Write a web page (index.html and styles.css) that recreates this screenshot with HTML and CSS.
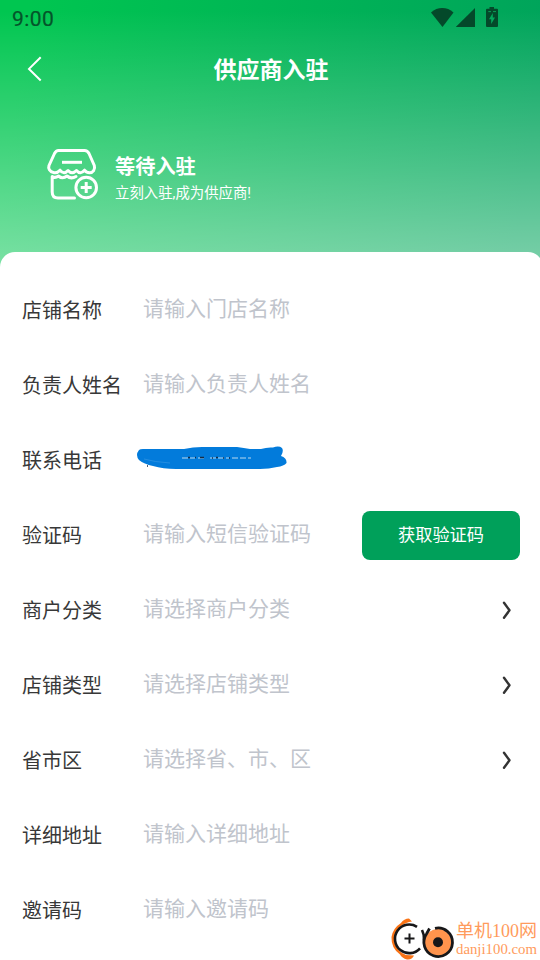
FILE: index.html
```
<!DOCTYPE html>
<html lang="zh-CN">
<head>
<meta charset="utf-8">
<title>供应商入驻</title>
<link rel="stylesheet" href="styles.css">
</head>
<body>
<header class="hero">
  <div class="status">
    <span class="time">9:00</span>
    <svg class="status-icons" width="70" height="24" viewBox="0 0 70 24" fill="#04492a">
      <path d="M0 12.500C6.500 6.600 16 6.600 22.500 12.500L11.500 27Z"/>
      <path d="M25 27V26.800L44 8V27Z"/>
      <path fill-rule="evenodd" d="M58.500 7H63V8.700H66Q67 8.700 67 9.700V26Q67 27 66 27H56Q55 27 55 26V9.700Q55 8.700 56 8.700H58.500ZM61.800 13L58 19.300H60.200V24L64 17.500H61.800Z"/>
      <path d="M57.300 11.600H60M62 11.600H65" stroke="#0a9f57" stroke-width="1"/>
    </svg>
  </div>
  <div class="navbar">
    <svg class="back" width="18" height="26" viewBox="0 0 18 26" fill="none" stroke="#fff" stroke-width="2"><path d="M14.700 1.300L3 12.900L14.700 24.500"/></svg>
    <h1>供应商入驻</h1>
  </div>
  <div class="intro">
    <svg width="54" height="54" viewBox="0 0 54 54" fill="none" stroke="#fff" stroke-width="3" stroke-linecap="round" stroke-linejoin="round">
      <path d="M13.500 3.500H39.500Q42.500 3.500 44 6.500L49.300 18.500C50.500 22.500 48 25.800 44.500 25.800Q41.500 25.800 39.500 23.200Q35.300 28 31.500 23.500Q27 28 23 23.500Q19 28 15 23.200Q12 26.500 8.500 25.500C4.500 24.800 3 21.500 4 18.500L9.500 6.500Q11 3.500 13.500 3.500Z"/>
      <path d="M17 15.300H37" stroke-linecap="butt"/>
      <path d="M29.500 51H13Q7.200 51 7.200 45V29.500Q10 31.500 13.500 29Q17.500 32.500 22 29Q26 32.500 31 29.500"/>
      <circle cx="41.200" cy="40.500" r="10.300"/>
      <path d="M35.700 40.500H46.700M41.200 35V46" stroke-linecap="butt"/>
    </svg>
    <div class="intro-text">
      <h2>等待入驻</h2>
      <p>立刻入驻,成为供应商!</p>
    </div>
  </div>
</header>
<main class="form">
  <div class="row"><span class="label">店铺名称</span><span class="hint">请输入门店名称</span></div>
  <div class="row"><span class="label">负责人姓名</span><span class="hint">请输入负责人姓名</span></div>
  <div class="row"><span class="label">联系电话</span>
    <svg class="redaction" width="153" height="26" viewBox="0 0 153 26">
      <path fill="#027bdb" d="M4 4Q5 3 8 3H49Q58 1 67 1H102Q109 2 115 3H126Q132 1 138 1.500Q144 -.5 147 2Q149 5 146 10Q152 12 151.500 17Q149 20 142 21Q134 23 125 23H41Q28 23 18 20Q9 18 4 14Q0 9 4 4Z"/>
      <path d="M47 12H60M63 12H69M75 12H94M97 12H116" stroke="#b9d9ee" stroke-width="1" stroke-dasharray="6 2"/>
      <path d="M53 11.500H55M60 11.500H61M65 11.500H69M77 12H78M81 11.500H83M88 12H89M94 12H95M12 20H13" stroke="#172d47" stroke-width="1.700"/>
      <path d="M9 13Q19 16 35 17" fill="none" stroke="#3a98e3" stroke-width=".6"/>
    </svg>
  </div>
  <div class="row"><span class="label">验证码</span><span class="hint">请输入短信验证码</span><button class="code">获取验证码</button></div>
  <div class="row"><span class="label">商户分类</span><span class="hint">请选择商户分类</span><svg class="more" width="12" height="20" viewBox="0 0 12 20"><path d="M3 2.800L8.500 10.300L3 17.800"/></svg></div>
  <div class="row"><span class="label">店铺类型</span><span class="hint">请选择店铺类型</span><svg class="more" width="12" height="20" viewBox="0 0 12 20"><path d="M3 2.800L8.500 10.300L3 17.800"/></svg></div>
  <div class="row"><span class="label">省市区</span><span class="hint">请选择省、市、区</span><svg class="more" width="12" height="20" viewBox="0 0 12 20"><path d="M3 2.800L8.500 10.300L3 17.800"/></svg></div>
  <div class="row"><span class="label">详细地址</span><span class="hint">请输入详细地址</span></div>
  <div class="row"><span class="label">邀请码</span><span class="hint">请输入邀请码</span></div>
</main>
<div class="watermark">
  <svg width="66" height="44" viewBox="0 0 66 44" fill="none">
    <path fill="#f97316" d="M11 7Q14 2.500 19 2.500L22 5.500Q16 6 11 10Q2 18 5 28Q8 36 16 39L24 39.500Q22 44 17 43.500Q12 42 10 38.500Q1 32 1.500 21Q3 12 11 7Z"/>
    <circle cx="48" cy="26.500" r="13.500" fill="#ff944d"/>
    <path d="M27 10.800A14.300 14.300 0 1 0 30 32.300M32 14Q34.500 19 34 24" stroke="#171719" stroke-width="2.600"/>
    <path d="M19.500 17.500V27.500M14.500 22.500H24.500" stroke="#171719" stroke-width="2"/>
    <path d="M45 12.300A14.300 14.300 0 1 1 36.500 18L39.500 12.500" stroke="#171719" stroke-width="2.800"/>
    <circle cx="48" cy="26.300" r="5" fill="#171719"/>
  </svg>
  <div class="mark-text"><span class="mark-name">单机100网</span><span class="mark-url">danji100.com</span></div>
</div>
</body>
</html>
```

FILE: styles.css
```
* { box-sizing: border-box; }
body {
  margin: 0;
  width: 540px;
  height: 960px;
  overflow: hidden;
  position: relative;
  background: #fff;
  font-family: Roboto, "Noto Sans CJK SC", sans-serif;
}
h1, h2, p { margin: 0; }
svg { display: block; flex: none; }
.hero {
  height: 272px;
  color: #fff;
  background:
    linear-gradient(180deg, rgba(255,255,255,0) 4%, rgba(255,255,255,.49) 100%),
    linear-gradient(98deg, #00c650 5%, #00a45b 95%);
}
.status {
  height: 38px;
  padding: 0 39px 0 12px;
  display: flex;
  justify-content: space-between;
}
.time {
  font-size: 21px;
  line-height: 38px;
  letter-spacing: .4px;
  color: #04542a;
  -webkit-text-stroke: .2px #04542a;
}
.status-icons { overflow: visible; }
.navbar {
  height: 62px;
  display: flex;
  align-items: center;
  padding-left: 26px;
}
.navbar h1 {
  flex: 1;
  padding: 3px 42px 0 0;
  text-align: center;
  font-size: 23px;
  line-height: 34px;
  font-weight: 700;
}
.intro {
  display: flex;
  padding: 47px 0 0 45px;
}
.intro-text { padding: 6px 0 0 16px; }
.intro h2 { font-size: 20.2px; line-height: 29px; font-weight: 700; }
.intro p { font-size: 14.4px; line-height: 23px; }
.form {
  width: 543px;
  height: 708px;
  margin-top: -20px;
  padding: 21px 23px 0 22px;
  background: #fff;
  border-radius: 15px 15px 0 0;
  overflow: hidden;
  position: relative;
}
.row {
  height: 74.9px;
  display: flex;
  align-items: center;
}
.label {
  width: 121px;
  flex: none;
  font-size: 20px;
  line-height: 30px;
  padding-top: 2px;
  color: #383838;
}
.hint {
  flex: 1;
  font-size: 21px;
  line-height: 30px;
  padding-bottom: 2px;
  color: #c0c4cc;
}
.redaction { margin: 0 0 2px -8px; }
.code {
  width: 158px;
  height: 49px;
  padding: 0 0 4px;
  border: 0;
  border-radius: 8px;
  background: #00a05a;
  color: #fff;
  font: 17.2px Roboto, "Noto Sans CJK SC", sans-serif;
}
.more {
  margin-right: 7px;
  fill: none;
  stroke: #333;
  stroke-width: 2.4;
  stroke-linecap: round;
  stroke-linejoin: round;
}
.watermark {
  position: absolute;
  left: 390px;
  top: 916px;
  display: flex;
}
.mark-text {
  display: flex;
  flex-direction: column;
  padding-top: 5px;
  color: #ff9b5c;
  white-space: nowrap;
}
.mark-name { font: 18px/20px "Liberation Serif", "Noto Sans CJK SC", serif; }
.mark-url { font: 14.8px/17px "Liberation Serif", serif; }
```
